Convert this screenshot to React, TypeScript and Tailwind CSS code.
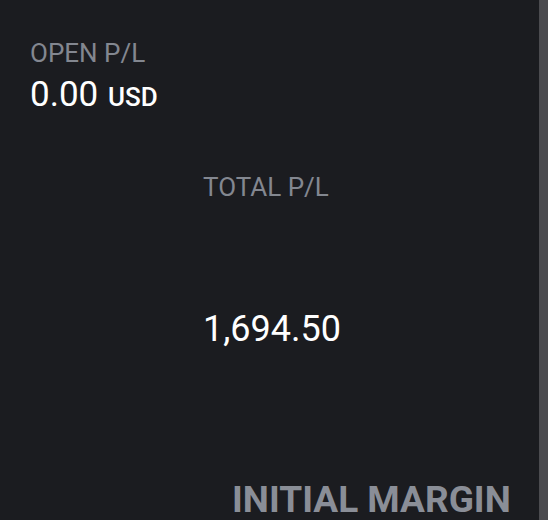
import React from "react";

export default function App() {
  return (
    <div
      className="flex h-[520px] w-[548px] overflow-hidden bg-[#1b1c20]"
      style={{ fontFamily: "Roboto, 'Noto Sans', sans-serif" }}
    >
      <div className="flex flex-1 flex-col">
        <div className="pl-[30px] pt-[38px]">
          <div className="text-[26px] leading-[30px] text-[#838790]">OPEN P/L</div>
          <div className="mt-[7px] text-[35px] leading-[40px] text-white">
            0.00 <span className="ml-[1px] text-[26px] font-medium leading-none">USD</span>
          </div>
        </div>
        <div className="ml-[203px] mt-[57px]">
          <div className="text-[26px] leading-[30px] text-[#838790]">TOTAL P/L</div>
          <div className="mt-[107px] text-[36px] leading-[40px] text-white">1,694.50</div>
        </div>
        <div className="ml-[232px] mt-[136px] whitespace-nowrap text-[37px] font-bold leading-[30px] text-[#8a8e97]">
          INITIAL MARGIN
        </div>
      </div>
      <div className="w-[9px] shrink-0 bg-[#4b4b4f]" />
    </div>
  );
}
